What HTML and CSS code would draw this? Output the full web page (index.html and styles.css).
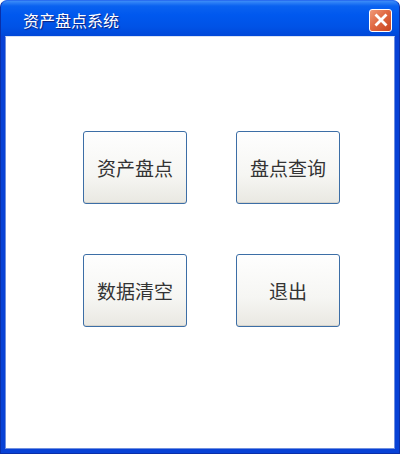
FILE: index.html
```html
<!DOCTYPE html>
<html lang="zh-CN">
<head>
<meta charset="utf-8">
<title>资产盘点系统</title>
<link rel="stylesheet" href="styles.css">
</head>
<body>
<div class="window">
  <div class="titlebar">
    <span class="title">资产盘点系统</span>
    <span class="close">
      <svg width="14" height="14" viewBox="0 0 14 14"><path d="M2.5 2.5 L11.5 11.5 M11.5 2.5 L2.5 11.5" stroke="#fff" stroke-width="2.8" stroke-linecap="square"/></svg>
    </span>
  </div>
  <div class="client">
    <div class="grid">
      <button class="btn">资产盘点</button>
      <button class="btn">盘点查询</button>
      <button class="btn">数据清空</button>
      <button class="btn">退出</button>
    </div>
  </div>
</div>
</body>
</html>
```
FILE: styles.css
```css
html, body {
  margin: 0;
  padding: 0;
  background: #ffffff;
}
.window {
  width: 400px;
  height: 454px;
  box-sizing: border-box;
  background: #0842d6;
  border-radius: 7px 7px 0 0;
  display: flex;
  flex-direction: column;
  overflow: hidden;
  border: 1px solid #0a2fa8;
  border-top-color: #2a6ef0;
}
.titlebar {
  height: 35px;
  flex: none;
  display: flex;
  align-items: center;
  justify-content: space-between;
  padding: 0 7px 0 22px;
  background: linear-gradient(#3c8cf8 0px, #0a62f0 5px, #0058ee 14px, #0052e6 26px, #0048d8 35px);
}
.title {
  font-family: "Noto Sans CJK SC", sans-serif;
  font-size: 16px;
  color: #ffffff;
  text-shadow: 1px 1px 1px #0a1f7a;
  padding-top: 2px;
}
.close {
  width: 23px;
  height: 23px;
  box-sizing: border-box;
  border: 1px solid #ffffff;
  border-radius: 3px;
  background: linear-gradient(135deg, #f09a7a 0%, #e06a44 45%, #c8451f 100%);
  display: flex;
  align-items: center;
  justify-content: center;
  margin-top: 3px;
}
.client {
  flex: 1;
  margin: 0 4px 4px 4px;
  background: #ffffff;
  border: 1px solid #6f8fdf;
  border-top-color: #d8e2f4;
}
.grid {
  display: grid;
  grid-template-columns: 104px 104px;
  grid-auto-rows: 73px;
  column-gap: 49px;
  row-gap: 50px;
  padding: 94px 0 0 77px;
}
.btn {
  margin: 0;
  padding: 0;
  box-sizing: border-box;
  border: 1px solid #3c6ea6;
  border-radius: 3px;
  background: linear-gradient(#fefefe 0%, #f6f6f3 60%, #e9e8e2 100%);
  box-shadow: inset 0 -1px 0 #d6d4cc;
  font-family: "Noto Sans CJK SC", serif;
  font-size: 19px;
  color: #333333;
  cursor: pointer;
}
```
